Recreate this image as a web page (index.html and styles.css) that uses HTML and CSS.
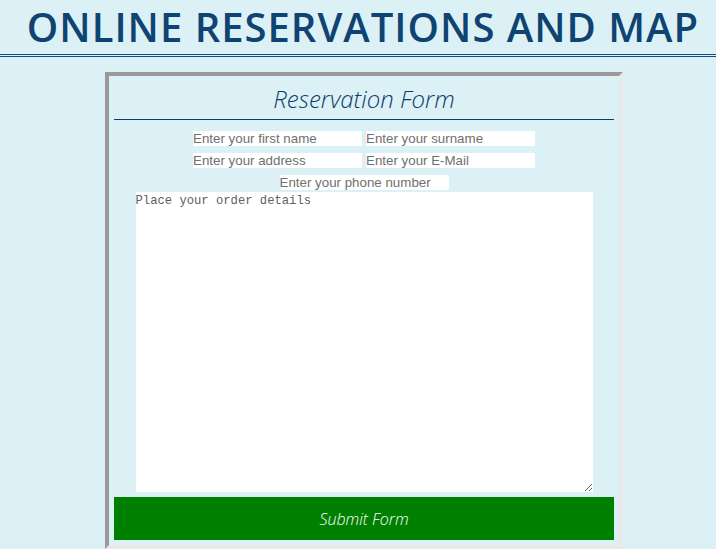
FILE: index.html
```html
<!DOCTYPE html>
<html>
<head>
<meta charset="utf-8">
<link rel="stylesheet" href="styles.css">
</head>
<body>
<h1 class="page-title">ONLINE RESERVATIONS AND MAP</h1>
<div class="form-box">
  <h2 class="form-title">Reservation Form</h2>
  <form class="res-form">
    <div class="row">
      <input class="field" type="text" placeholder="Enter your first name">
      <input class="field" type="text" placeholder="Enter your surname">
    </div>
    <div class="row">
      <input class="field" type="text" placeholder="Enter your address">
      <input class="field" type="text" placeholder="Enter your E-Mail">
    </div>
    <div class="row">
      <input class="field" type="text" placeholder="Enter your phone number">
    </div>
    <textarea class="details" placeholder="Place your order details"></textarea>
    <button class="submit" type="button">Submit Form</button>
  </form>
</div>
</body>
</html>
```

FILE: styles.css
```css
html, body {
  margin: 0;
  padding: 0;
  background: #dcf1f5;
}
body {
  font-family: "Open Sans", sans-serif;
  overflow: hidden;
}
.page-title {
  margin: -1px 0 0 0;
  padding: 0 0 0 10px;
  text-align: center;
  font-family: "Open Sans", sans-serif;
  font-weight: 600;
  font-size: 40px;
  line-height: 55px;
  letter-spacing: 1px;
  color: #0e4372;
  border-bottom: 3px double #0e4a86;
}
.form-box {
  width: 500px;
  margin: 15px 0 0 105px;
  padding: 0 5px 5px 5px;
  border-style: solid;
  border-width: 4px 4px 4px 4px;
  border-color: #999999 #e9e9e9 #e9e9e9 #999999;
}
.form-title {
  margin: 0;
  padding: 6px 0 4px 0;
  text-align: center;
  font-family: "Open Sans", sans-serif;
  font-style: italic;
  font-weight: 350;
  font-size: 24px;
  line-height: 33px;
  color: #0e3c6c;
  border-bottom: 1px solid #0e3c6c;
}
.res-form {
  display: flex;
  flex-direction: column;
  align-items: center;
  padding-top: 11px;
}
.row {
  display: flex;
  justify-content: center;
  gap: 4px;
  margin-bottom: 7px;
}
.field {
  width: 169px;
  height: 15px;
  box-sizing: border-box;
  padding: 0;
  border: none;
  background: #ffffff;
  font-family: "Liberation Sans", Arial, sans-serif;
  font-size: 13.33px;
  color: #333;
}
.field::placeholder {
  color: #707070;
}
.row:nth-child(3) {
  margin-bottom: 2px;
}
.details {
  width: 457px;
  height: 300px;
  box-sizing: border-box;
  margin: 0;
  padding: 2px 0 0 0;
  border: none;
  background: #ffffff;
  font-family: "Liberation Mono", "DejaVu Sans Mono", monospace;
  font-size: 12.2px;
}
.details::placeholder {
  color: #606060;
}
.submit {
  width: 500px;
  height: 43px;
  margin-top: 5px;
  border: none;
  background: #008000;
  color: #ffffff;
  font-family: "Open Sans", sans-serif;
  font-style: italic;
  font-weight: 350;
  font-size: 16px;
}
```
